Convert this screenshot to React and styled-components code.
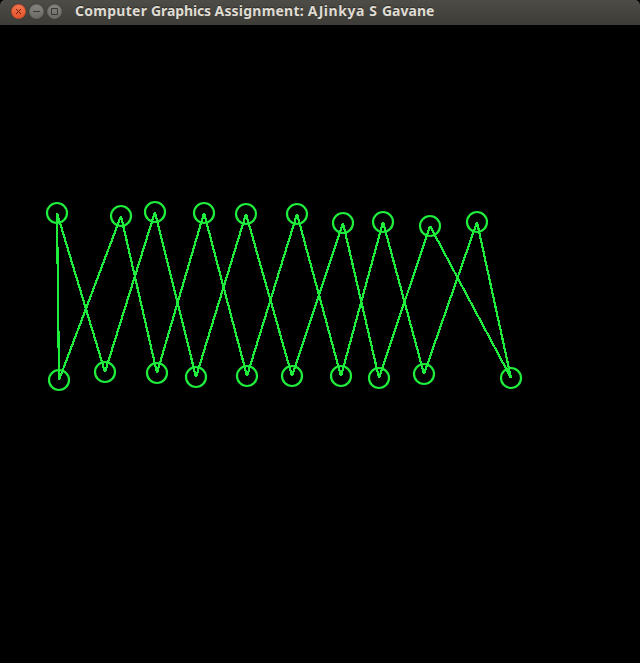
import React from "react";
import styled, { createGlobalStyle } from "styled-components";

const GlobalStyle = createGlobalStyle`
  body { margin: 0; background: #000; overflow: hidden; }
`;

const Window = styled.main`
  display: flex;
  flex-direction: column;
  width: 640px;
  height: 663px;
  background: #000;
`;

const TitleBar = styled.header`
  display: flex;
  align-items: flex-start;
  box-sizing: border-box;
  height: 25px;
  flex: none;
  padding: 0 11px;
  border-radius: 5px 5px 0 0;
  background: linear-gradient(#4d4c47, #3d3c37);
`;

const Controls = styled.div`
  display: flex;
  gap: 3px;
  padding-top: 4px;
`;

const ControlButton = styled.button`
  display: block;
  width: 15px;
  height: 15px;
  padding: 0;
  border: 1px solid ${(p) => (p.$close ? "#c9502c" : "#6a6964")};
  border-radius: 50%;
  color: ${(p) => (p.$close ? "#64200d" : "#3a3935")};
  background: ${(p) =>
    p.$close ? "linear-gradient(#f4764f, #e4532b)" : "linear-gradient(#85847e, #6c6b66)"};
  box-shadow: 0 0 1px #292823;
`;

const Glyph = styled.svg`
  display: block;
  width: 13px;
  height: 13px;
  fill: none;
  stroke: currentColor;
  stroke-width: 1;
`;

const Title = styled.h1`
  margin: 0 0 0 13px;
  color: #dfdbd2;
  font: 700 14px/22px "Noto Sans", "Open Sans", sans-serif;
  white-space: pre;
  text-shadow: 0 -1px #2f2e2a;
`;

const Word = styled.span`
  letter-spacing: ${(p) => p.$tracking}px;
`;

const Canvas = styled.svg`
  display: block;
  width: 640px;
  height: 638px;
  fill: none;
  stroke: #1fee3c;
  stroke-width: 2.2;
`;

const words = [
  ["Computer ", 0.27],
  ["Graphics ", -0.13],
  ["Assignment: ", 0.22],
  ["AJinkya ", 0.55],
  ["S ", 0.7],
  ["Gavane", 0.02],
];

const top = [
  [57, 213], [121, 216], [155, 212], [204, 213], [246, 214],
  [297, 214], [343, 223], [383, 222], [430, 226], [477, 222],
];
const bottom = [
  [59, 380], [105, 372], [157, 373], [196, 377], [247, 376],
  [292, 376], [341, 376], [379, 378], [424, 374], [511, 378],
];
const last = top.length - 1;
const edges = top.flatMap((point, i) => [
  [point, bottom[Math.max(0, i - 1)]],
  [point, bottom[Math.min(last, i + 1)]],
]);

export default function App() {
  return (
    <>
      <GlobalStyle />
      <Window>
        <TitleBar>
          <Controls>
            <ControlButton $close aria-label="Close">
              <Glyph viewBox="0 0 13 13"><path d="m4 4 5 5m0-5-5 5" /></Glyph>
            </ControlButton>
            <ControlButton aria-label="Minimize">
              <Glyph viewBox="0 0 13 13"><path d="M3 6.5h7" /></Glyph>
            </ControlButton>
            <ControlButton aria-label="Maximize">
              <Glyph viewBox="0 0 13 13"><path d="M3.5 3.5h6v6h-6z" /></Glyph>
            </ControlButton>
          </Controls>
          <Title>
            {words.map(([text, tracking]) => (
              <Word key={text} $tracking={tracking}>{text}</Word>
            ))}
          </Title>
        </TitleBar>
        <Canvas viewBox="0 25 640 638">
          <g shapeRendering="crispEdges">
            {edges.map(([a, b], i) => (
              <line key={i} x1={a[0]} y1={a[1]} x2={b[0]} y2={b[1]} />
            ))}
          </g>
          {[...top, ...bottom].map(([x, y]) => (
            <circle key={`${x}-${y}`} cx={x} cy={y} r="10" />
          ))}
        </Canvas>
      </Window>
    </>
  );
}
